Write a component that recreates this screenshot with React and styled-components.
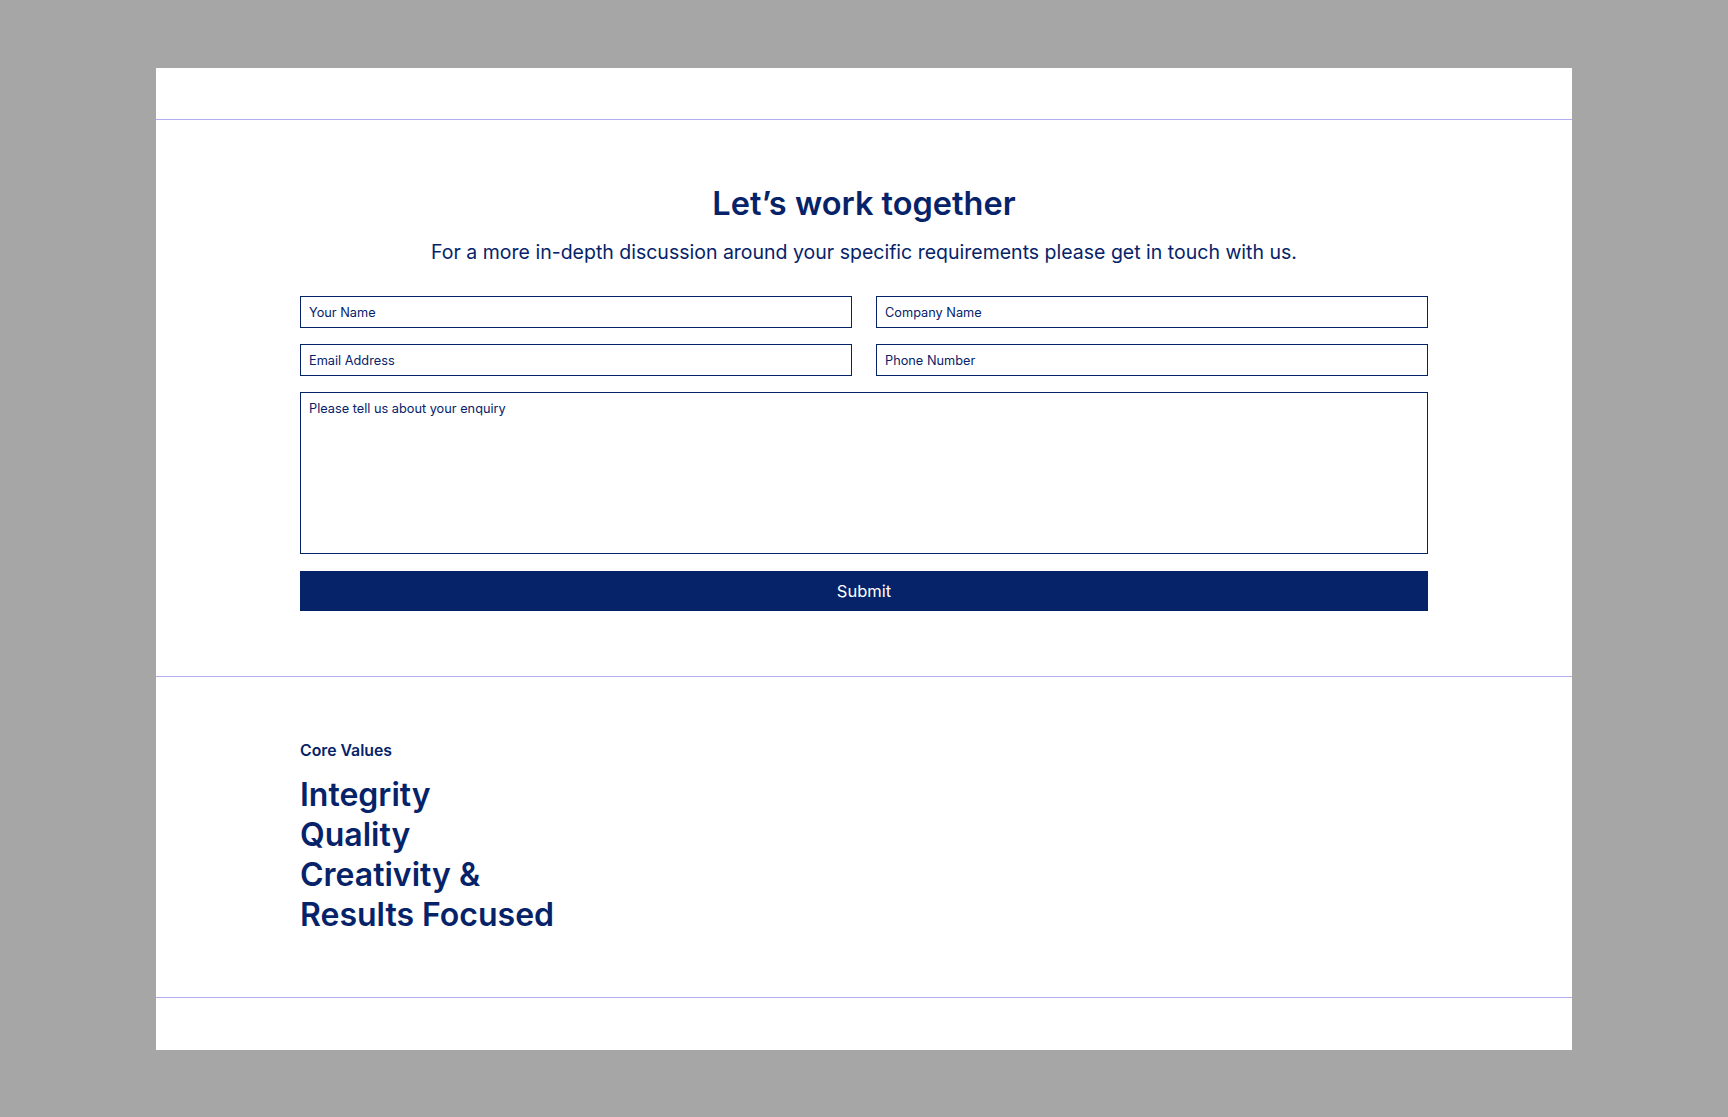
import React from 'react';
import styled, { createGlobalStyle } from 'styled-components';

const navy = '#06236a';
const rule = '#b3aef2';

const GlobalStyle = createGlobalStyle`
  html, body {
    margin: 0;
    padding: 0;
    background: #a6a6a6;
    font-family: Inter, "Noto Sans", Arial, sans-serif;
    -webkit-font-smoothing: antialiased;
  }
  * {
    box-sizing: border-box;
  }
`;

const Page = styled.div`
  padding: 68px 156px 67px;
`;

const Sheet = styled.div`
  background: #fff;
  height: 982px;
  display: flex;
  flex-direction: column;
`;

const Band = styled.div`
  height: ${(p) => p.$h}px;
  border-bottom: ${(p) => (p.$ruled ? `1px solid ${rule}` : 'none')};
  flex-shrink: 0;
`;

const Section = styled.section`
  border-bottom: 1px solid ${rule};
  padding: ${(p) => p.$pad};
`;

const Inner = styled.div`
  width: 1128px;
  margin: 0 auto;
`;

const Heading = styled.h2`
  margin: 0;
  text-align: center;
  color: ${navy};
  font-size: 32.5px;
  line-height: 40px;
  font-weight: 600;
`;

const Lead = styled.p`
  margin: 14px 0 0;
  text-align: center;
  color: ${navy};
  font-size: 19.5px;
  line-height: 28px;
  font-weight: 400;
`;

const Form = styled.form`
  margin-top: 30px;
  display: grid;
  grid-template-columns: 1fr 1fr;
  column-gap: 24px;
  row-gap: 16px;
`;

const Field = styled.input`
  height: 32px;
  border: 1px solid ${navy};
  border-radius: 0;
  padding: 0 8px;
  font-family: inherit;
  font-size: 12.75px;
  color: ${navy};
  background: #fff;
  outline: none;

  &::placeholder {
    color: ${navy};
    opacity: 1;
  }
`;

const Message = styled.textarea`
  grid-column: 1 / -1;
  height: 162px;
  border: 1px solid ${navy};
  border-radius: 0;
  padding: 8px 8px;
  font-family: inherit;
  font-size: 12.75px;
  line-height: 16px;
  color: ${navy};
  resize: none;
  outline: none;

  &::placeholder {
    color: ${navy};
    opacity: 1;
  }
`;

const Submit = styled.button`
  grid-column: 1 / -1;
  margin-top: 1px;
  height: 40px;
  border: none;
  border-radius: 0;
  background: ${navy};
  color: #fff;
  font-family: inherit;
  font-size: 16.5px;
  font-weight: 400;
  cursor: pointer;
`;

const Eyebrow = styled.div`
  color: ${navy};
  font-size: 15.8px;
  line-height: 20px;
  font-weight: 600;
`;

const ValueList = styled.ul`
  list-style: none;
  margin: 14px 0 0;
  padding: 0;
`;

const Value = styled.li`
  color: ${navy};
  font-size: 32px;
  line-height: 40px;
  font-weight: 600;
`;

const values = ['Integrity', 'Quality', 'Creativity &', 'Results Focused'];

export default function App() {
  return (
    <>
      <GlobalStyle />
      <Page>
        <Sheet>
          <Band $h={52} $ruled />

          <Section $pad="64px 0 65px">
            <Inner>
              <Heading>Let’s work together</Heading>
              <Lead>
                For a more in-depth discussion around your specific requirements please get in
                touch with us.
              </Lead>
              <Form onSubmit={(e) => e.preventDefault()}>
                <Field placeholder="Your Name" />
                <Field placeholder="Company Name" />
                <Field placeholder="Email Address" />
                <Field placeholder="Phone Number" />
                <Message placeholder="Please tell us about your enquiry" />
                <Submit type="submit">Submit</Submit>
              </Form>
            </Inner>
          </Section>

          <Section $pad="64px 0 62px">
            <Inner>
              <Eyebrow>Core Values</Eyebrow>
              <ValueList>
                {values.map((v) => (
                  <Value key={v}>{v}</Value>
                ))}
              </ValueList>
            </Inner>
          </Section>

          <Band $h={53} />
        </Sheet>
      </Page>
    </>
  );
}
